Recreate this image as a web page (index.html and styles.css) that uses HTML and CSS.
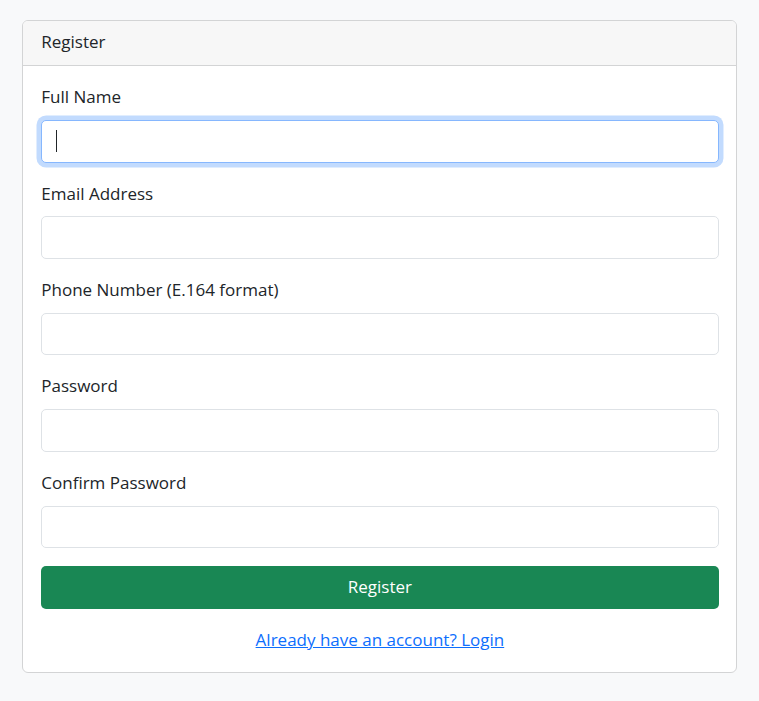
FILE: index.html
```html
<!DOCTYPE html>
<html lang="en">
<head>
<meta charset="utf-8">
<title>Register</title>
<link rel="stylesheet" href="styles.css">
</head>
<body>
<main class="page">
  <section class="card">
    <div class="card-header">Register</div>
    <form class="card-body">
      <div class="field">
        <label class="form-label" for="name">Full Name</label>
        <div class="input-wrap">
          <input class="form-control focused" id="name" type="text">
          <span class="caret"></span>
        </div>
      </div>
      <div class="field">
        <label class="form-label" for="email">Email Address</label>
        <input class="form-control" id="email" type="email">
      </div>
      <div class="field">
        <label class="form-label" for="phone">Phone Number (E.164 format)</label>
        <input class="form-control" id="phone" type="tel">
      </div>
      <div class="field">
        <label class="form-label" for="pw">Password</label>
        <input class="form-control" id="pw" type="password">
      </div>
      <div class="field">
        <label class="form-label" for="pw2">Confirm Password</label>
        <input class="form-control" id="pw2" type="password">
      </div>
      <button class="btn-success" type="button">Register</button>
      <p class="login-line"><a href="#">Already have an account? Login</a></p>
    </form>
  </section>
</main>
</body>
</html>
```
FILE: styles.css
```css
* { box-sizing: border-box; }
html, body { margin: 0; padding: 0; }
body {
  background: #f8f9fa;
  color: #212529;
  font-family: "Open Sans", "Noto Sans", sans-serif;
  font-size: 17px;
  line-height: 26.88px;
}
.page {
  padding: 19.5px 21.6px 0 22.4px;
}
.card {
  background: #fff;
  border: 1.12px solid #d3d4d5;
  border-radius: 6px;
  overflow: hidden;
}
.card-header {
  background: #f7f7f7;
  border-bottom: 1.12px solid #d3d4d5;
  padding: 8.96px 17.92px;
}
.card-body {
  padding: 17.92px 17.92px;
  display: flex;
  flex-direction: column;
}
.field {
  display: flex;
  flex-direction: column;
  margin-bottom: 18px;
}
.form-label {
  margin-bottom: 9px;
}
.input-wrap { position: relative; }
.form-control {
  display: block;
  width: 100%;
  height: 42.56px;
  padding: 6.72px 13.44px;
  font: inherit;
  border: 1.12px solid #dee2e6;
  border-radius: 5px;
  background: #fff;
  outline: none;
}
.form-control.focused {
  border-color: #86b7fe;
  box-shadow: 0 0 0 4.48px rgba(13, 110, 253, 0.25);
}
.caret {
  position: absolute;
  left: 14.5px;
  top: 9.5px;
  width: 1.2px;
  height: 22px;
  background: #212529;
}
.btn-success {
  height: 42.56px;
  width: 100%;
  border: none;
  border-radius: 5px;
  background: #198754;
  color: #fff;
  font: inherit;
  padding: 0;
}
.login-line {
  margin: 17.92px 0 0;
  text-align: center;
}
.login-line a { color: #0d6efd; }
```
